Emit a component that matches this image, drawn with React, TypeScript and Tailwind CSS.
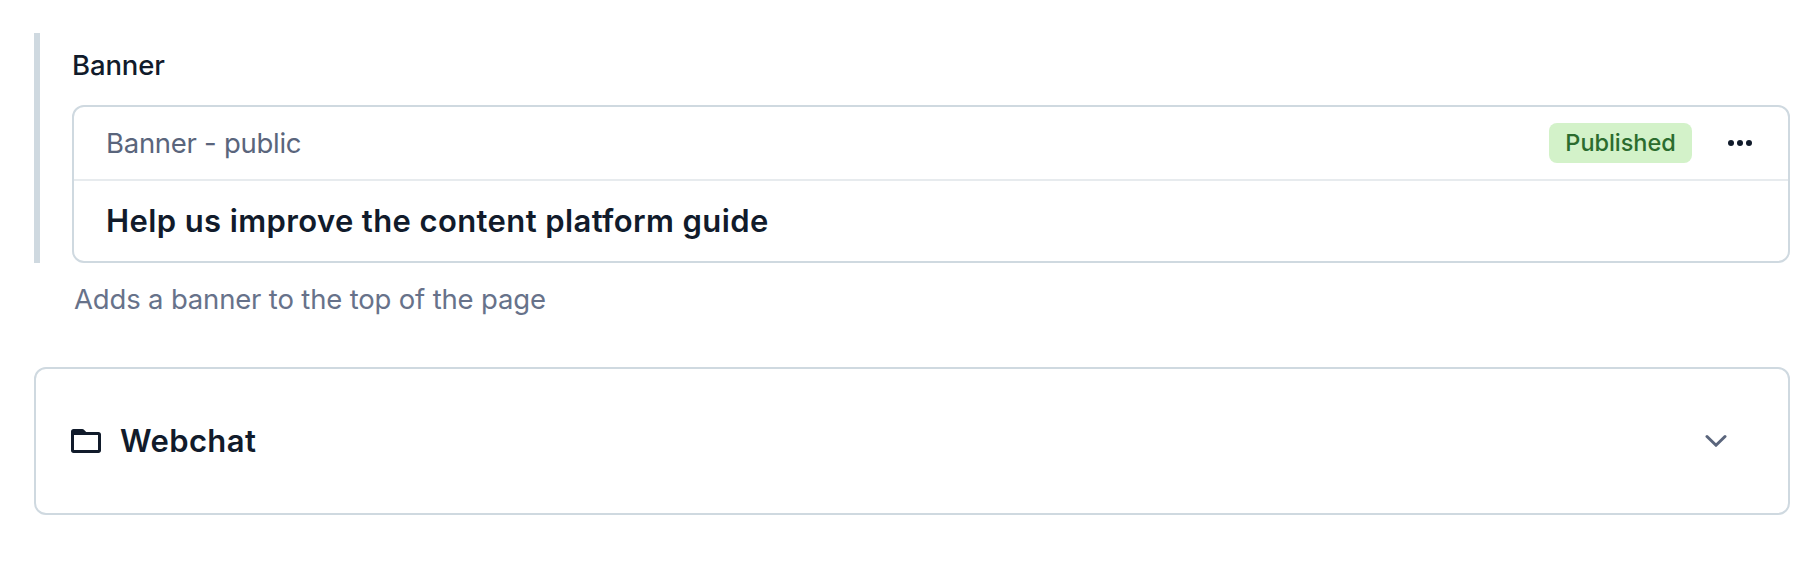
import type { ReactNode } from 'react'

function MoreIcon() {
  return (
    <svg width="24" height="6" viewBox="0 0 24 6" fill="#111b2b">
      <circle cx="3" cy="3" r="3" />
      <circle cx="12" cy="3" r="3" />
      <circle cx="21" cy="3" r="3" />
    </svg>
  )
}

function FolderIcon() {
  return (
    <svg width="30" height="24" viewBox="0 0 30 24" fill="#111b2b">
      <path
        fillRule="evenodd"
        d="M2.5 0H11.2C12 0 12.7 .4 13.2 .9L15.2 3H27.5C28.9 3 30 4.1 30 5.5V21.5C30 22.9 28.9 24 27.5 24H2.5C1.1 24 0 22.9 0 21.5V2.5C0 1.1 1.1 0 2.5 0ZM3 6V21H27V6Z"
      />
    </svg>
  )
}

function ChevronIcon() {
  return (
    <svg width="22" height="14" viewBox="0 0 22 14" fill="none" stroke="#5a657c" strokeWidth="3" strokeLinecap="round" strokeLinejoin="round">
      <path d="M2 2.5L11 11.3L20 2.5" />
    </svg>
  )
}

function Badge({ children }: { children: ReactNode }) {
  return (
    <span className="flex h-10 w-[143px] items-center justify-center rounded-lg bg-[#d3f2c9] text-[23.5px] font-medium tracking-[-0.05px] text-[#2b6c2e]">
      {children}
    </span>
  )
}

export default function App() {
  return (
    <div className="h-[578px] w-[1820px] bg-white pt-[33px] pr-[30px] pl-[34px] font-['Inter',sans-serif] text-[#111b2b]">
      {/* Banner field */}
      <div className="h-[230px] border-l-[6px] border-[#cfd9e0] pl-8">
        <label className="flex h-[72px] items-center pb-2 text-[27.5px] leading-10 font-medium tracking-[-0.15px]">Banner</label>
        <div className="h-[158px] rounded-xl border-2 border-[#cfd9e0]">
          <div className="flex h-[74px] items-center border-b-2 border-[#e7ebee] pr-9 pl-8">
            <span className="flex-1 pt-0.5 text-[27.5px] tracking-[-0.28px] text-[#5a657c]">Banner - public</span>
            <Badge>Published</Badge>
            <button className="ml-9" aria-label="Actions">
              <MoreIcon />
            </button>
          </div>
          <div className="flex h-20 items-center pl-8">
            <h3 className="text-[31px] font-semibold tracking-[0.39px]">Help us improve the content platform guide</h3>
          </div>
        </div>
      </div>
      <p className="mt-4 pl-10 text-[27.5px] leading-10 tracking-[-0.17px] text-[#67728a]">
        Adds a banner to the top of the page
      </p>

      {/* Collapsed group */}
      <div className="mt-12 flex h-[148px] items-center rounded-xl border-2 border-[#cfd9e0] pr-[61px] pl-[35px]">
        <FolderIcon />
        <h3 className="ml-[19px] flex-1 text-[31px] font-semibold tracking-[0.39px]">Webchat</h3>
        <button aria-label="Expand">
          <ChevronIcon />
        </button>
      </div>
    </div>
  )
}
